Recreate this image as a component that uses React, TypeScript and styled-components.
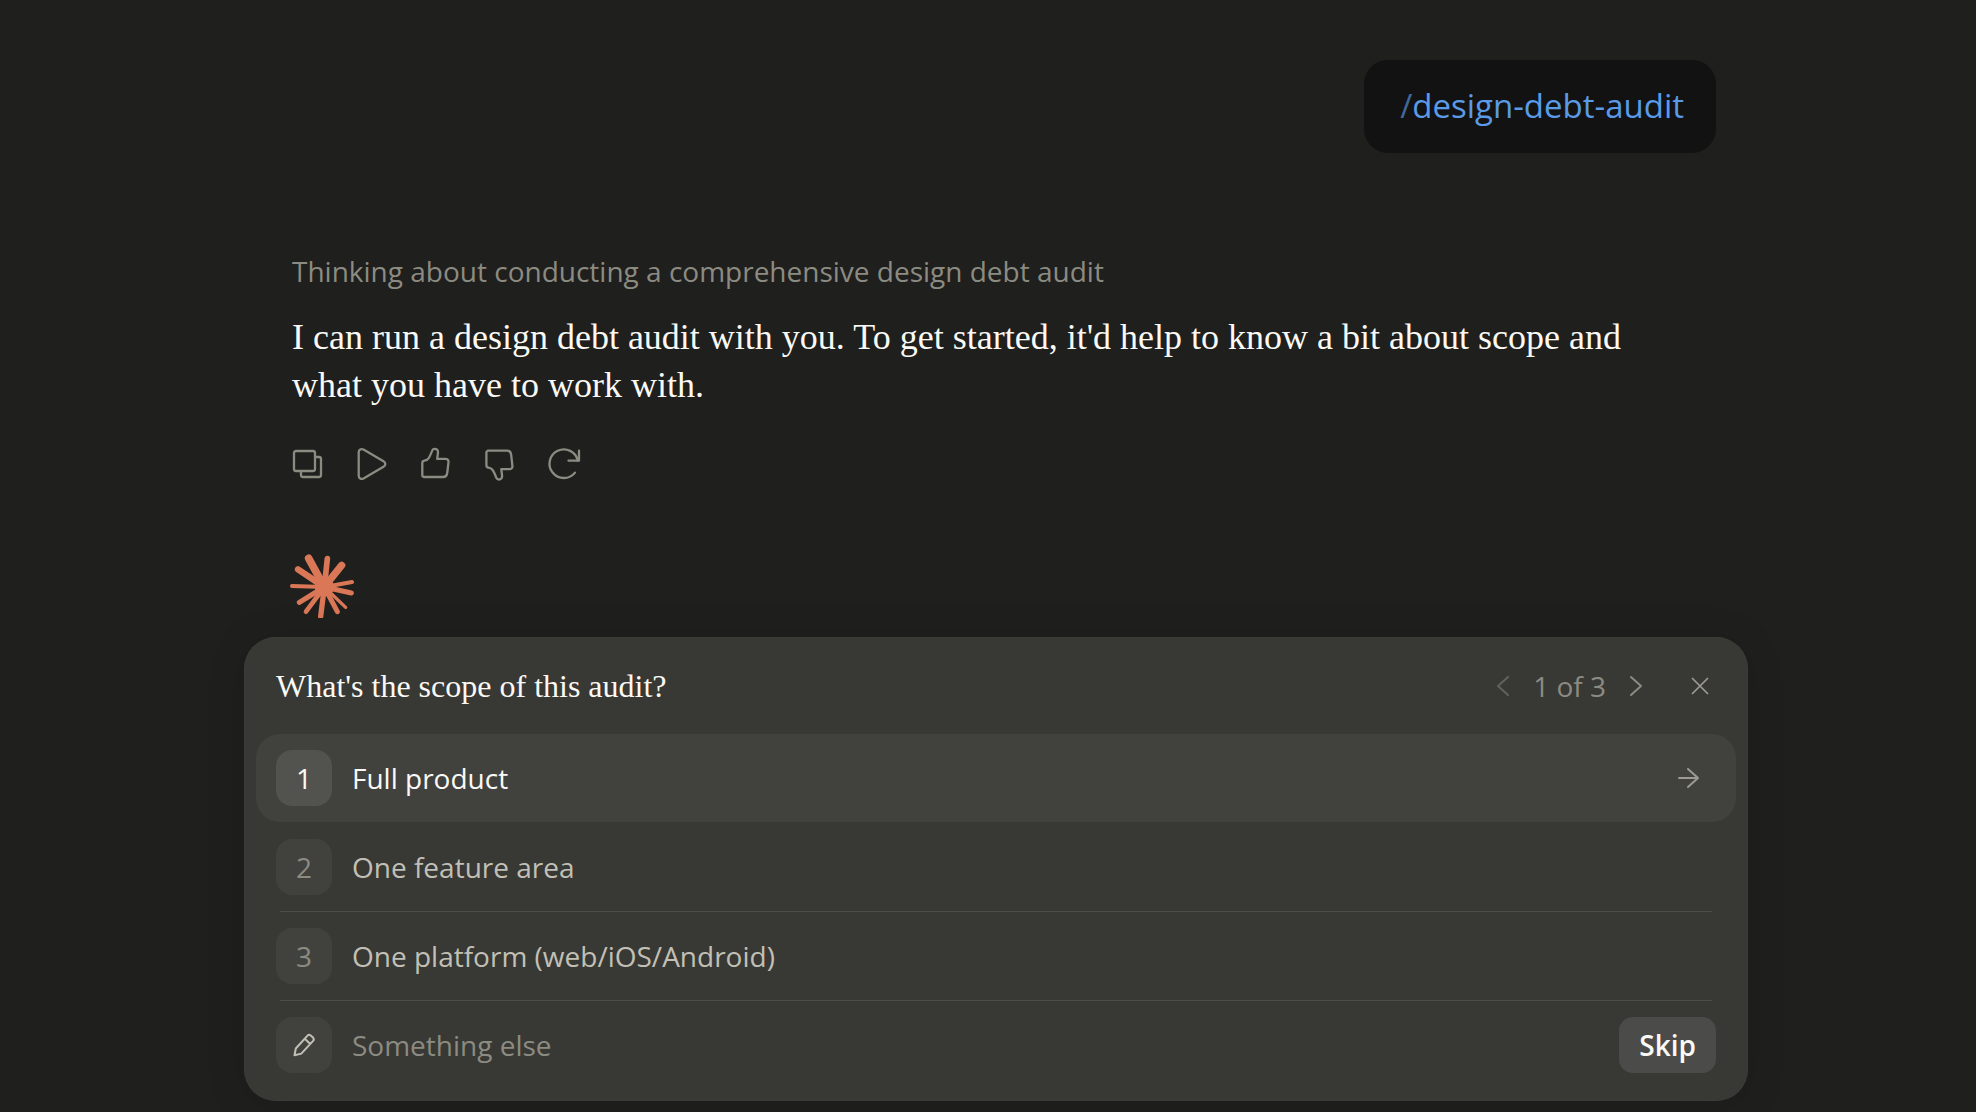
import React, { useState } from 'react';
import styled, { createGlobalStyle } from 'styled-components';

const sans = `"Open Sans", "Noto Sans", sans-serif`;
const serif = `"Liberation Serif", serif`;

const GlobalStyle = createGlobalStyle`
  *, *::before, *::after { box-sizing: border-box; }
  body { margin: 0; background: #1f1f1d; color: #faf9f5; font-family: ${sans}; }
  button, input { font: inherit; color: inherit; }
  button { border: 0; padding: 0; background: none; cursor: pointer; }
`;

const Page = styled.div`
  min-height: 100vh;
  padding: 60px 228px 11px 244px;
  display: flex;
  flex-direction: column;
`;

const Conversation = styled.main`
  display: flex;
  flex-direction: column;
  padding: 0 32px 0 48px;
`;

const UserMessage = styled.div`
  align-self: flex-end;
  padding: 24px 32px 25px 36px;
  border-radius: 24px;
  background: #121212;
  color: #5a9ae6;
  font-size: 33px;
  line-height: 44px;
`;

const Slash = styled.span`
  color: #41689a;
`;

const Thinking = styled.p`
  margin: 98px 0 0;
  color: #8c8b82;
  font-size: 28px;
  line-height: 40px;
`;

const Answer = styled.p`
  margin: 22px 0 0;
  padding-right: 32px;
  font-family: ${serif};
  font-size: 36px;
  line-height: 48px;
`;

const Actions = styled.div`
  display: flex;
  gap: 32px;
  margin-top: 39px;
  color: #8c8b82;
`;

const IconButton = styled.button<{ $faint?: boolean }>`
  display: flex;
  align-items: center;
  justify-content: center;
  width: 32px;
  height: 32px;
  opacity: ${(p) => (p.$faint ? 0.5 : 1)};
`;

const Icon = styled.svg<{ $weight?: number }>`
  display: block;
  flex: none;
  overflow: visible;
  fill: none;
  stroke: currentColor;
  stroke-width: ${(p) => p.$weight ?? 2};
  stroke-linecap: round;
  stroke-linejoin: round;
`;

const Logo = styled.svg`
  display: block;
  width: 64px;
  height: 64px;
  margin: 74px 0 0 -2px;
  fill: #d97757;
  stroke: #d97757;
  stroke-linecap: round;
`;

const Panel = styled.form`
  margin-top: 19px;
  padding: 12px;
  border-radius: 32px;
  background: #383834;
  box-shadow: inset 0 0 0 1px #3b3b37, 0 4px 40px rgba(0, 0, 0, 0.12);
`;

const PanelHeader = styled.div`
  display: flex;
  align-items: center;
  height: 73px;
  margin-bottom: 12px;
  padding: 0 20px;
`;

const Question = styled.h2`
  flex: 1;
  margin: 0;
  font-family: ${serif};
  font-size: 32px;
  font-weight: 400;
  line-height: 40px;
`;

const Pager = styled.div`
  display: flex;
  align-items: center;
  gap: 14px;
  margin-right: 32px;
  color: #8c8b82;
  font-size: 28px;
  line-height: 40px;
`;

const OptionList = styled.ul`
  margin: 0;
  padding: 0;
  list-style: none;
`;

const OptionItem = styled.li<{ $divided?: boolean }>`
  padding-bottom: 1px;
  background: linear-gradient(#4d4d49, #4d4d49) 50% 100% / calc(100% - 48px) ${(p) => (p.$divided ? '1px' : '0')} no-repeat;
`;

const OptionButton = styled.button<{ $active?: boolean }>`
  display: flex;
  align-items: center;
  gap: 20px;
  width: 100%;
  height: 88px;
  padding: 0 32px 0 20px;
  border-radius: 24px;
  background: ${(p) => (p.$active ? '#41413d' : 'transparent')};
  color: ${(p) => (p.$active ? '#faf9f5' : '#c2c0b6')};
  font-size: 28px;
  line-height: 40px;
  text-align: left;
`;

const Badge = styled.span<{ $active?: boolean; $bright?: boolean }>`
  display: flex;
  align-items: center;
  justify-content: center;
  flex: none;
  width: 56px;
  height: 56px;
  border-radius: 16px;
  background: ${(p) => (p.$active ? '#52524f' : '#41413d')};
  color: ${(p) => (p.$active ? '#faf9f5' : p.$bright ? '#c2c0b6' : '#8c8b82')};
`;

const OptionLabel = styled.span`
  flex: 1;
`;

const Arrow = styled.span`
  color: #9c9a92;
`;

const CustomRow = styled.label`
  display: flex;
  align-items: center;
  gap: 20px;
  height: 88px;
  padding: 0 20px;
`;

const CustomInput = styled.input`
  flex: 1;
  min-width: 0;
  height: 56px;
  padding: 0;
  border: 0;
  outline: 0;
  background: transparent;
  font-size: 28px;
  &::placeholder { color: #8c8b82; opacity: 1; }
`;

const SkipButton = styled.button`
  height: 56px;
  padding: 0 20px;
  border-radius: 14px;
  background: #4b4b49;
  font-size: 28px;
  font-weight: 600;
  line-height: 40px;
`;

const rays = [
  [116, 83, 23], [172, 84, 17], [215, 104, 22], [246, 154, 12], [244, 187, 15], [227, 230, 10],
  [202, 243, 15], [152, 257, 16], [108, 243, 14], [88, 215, 15], [66, 166, 12], [84, 116, 19],
];

const options = ['Full product', 'One feature area', 'One platform (web/iOS/Android)'];

export default function App() {
  const [active, setActive] = useState(0);
  return (
    <>
      <GlobalStyle />
      <Page>
        <Conversation>
          <UserMessage><Slash>/</Slash>design-debt-audit</UserMessage>
          <Thinking>Thinking about conducting a comprehensive design debt audit</Thinking>
          <Answer>
            I can run a design debt audit with you. To get started, it'd help to know a bit about scope and what you have to work with.
          </Answer>
          <Actions>
            <IconButton aria-label="Copy">
              <Icon $weight={2.3} width="32" height="32" viewBox="0 0 32 32">
                <rect x="2" y="3" width="21" height="20" rx="2" />
                <path d="M23.5 9H27a2 2 0 0 1 2 2v16a2 2 0 0 1-2 2H11a2 2 0 0 1-2-2v-3.500" />
              </Icon>
            </IconButton>
            <IconButton aria-label="Read aloud">
              <Icon $weight={2.3} width="32" height="32" viewBox="0 0 32 32">
                <path d="M2.700 4.500C2.700 1.500 5 .3 7.500 1.600L27.500 13.200C30 14.700 30 17.300 27.500 18.800L7.500 30.400C5 31.700 2.700 30.500 2.700 27.500Z" />
              </Icon>
            </IconButton>
            <IconButton aria-label="Good response">
              <Icon $weight={2.3} width="32" height="32" viewBox="0 0 32 32">
                <path d="M2.300 15C2.300 13.500 3 12.800 4.400 12.600C6.500 12.300 8 11.500 9 9.700C10.200 7.500 11.200 5.500 12 3C12.500 1.300 13.400.8 14.700.8C16.800.8 18.100 2.200 18 4.300L17.200 10.800H25.300C27.600 10.800 28.700 12.200 28.500 14.200L27.300 24.500C27 27.500 25.700 29 23 29H4.300C3 29 2.300 28.300 2.300 27Z" />
              </Icon>
            </IconButton>
            <IconButton aria-label="Bad response">
              <Icon $weight={2.3} width="32" height="32" viewBox="0 0 32 32">
                <path d="M2.400 17.300C2.400 18.800 3.100 19.500 4.500 19.700C6.600 20 8.100 20.800 9.100 22.600C10.300 24.800 11.300 26.800 12.100 29.300C12.600 31 13.500 31.500 14.800 31.500C16.900 31.500 18.200 30.100 18.100 28L17.300 21.200H25.400C27.500 21.200 28.600 19.800 28.400 18L27.200 7C26.900 4.200 25.600 2.700 23 2.700H4.400C3.100 2.700 2.400 3.400 2.400 4.700Z" />
              </Icon>
            </IconButton>
            <IconButton aria-label="Retry">
              <Icon $weight={2.3} width="32" height="32" viewBox="0 0 32 32">
                <path d="M27 24.600A14.300 14.300 0 1 1 29.800 12.700" />
                <path d="M31 2.700V12.700H20.500" />
              </Icon>
            </IconButton>
          </Actions>
          <Logo viewBox="60 70 192 192" role="img" aria-label="Assistant">
            {rays.map(([x, y, w]) => (
              <line key={`${x}-${y}`} x1="163" y1="169" x2={x} y2={y} strokeWidth={w} />
            ))}
            <circle cx="163" cy="169" r="29" stroke="none" />
          </Logo>
        </Conversation>

        <Panel onSubmit={(e) => e.preventDefault()}>
          <PanelHeader>
            <Question>What's the scope of this audit?</Question>
            <Pager>
              <IconButton type="button" $faint aria-label="Previous question">
                <Icon width="12" height="20" viewBox="0 0 12 20"><path d="M11 1 1 10 11 19" /></Icon>
              </IconButton>
              <span>1 of 3</span>
              <IconButton type="button" aria-label="Next question">
                <Icon width="12" height="20" viewBox="0 0 12 20"><path d="M1 1 11 10 1 19" /></Icon>
              </IconButton>
            </Pager>
            <IconButton type="button" aria-label="Close">
              <Icon $weight={1.7} width="16" height="16" viewBox="0 0 16 16" color="#9c9a92"><path d="M.5.5 15.500 15.500M15.500.5.5 15.500" /></Icon>
            </IconButton>
          </PanelHeader>
          <OptionList>
            {options.map((label, i) => (
              <OptionItem key={label} $divided={i !== active}>
                <OptionButton type="button" $active={i === active} onClick={() => setActive(i)}>
                  <Badge $active={i === active}>{i + 1}</Badge>
                  <OptionLabel>{label}</OptionLabel>
                  {i === active && (
                    <Arrow>
                      <Icon width="32" height="20" viewBox="0 0 32 20"><path d="M7 10H26M16 1 26 10 16 19" /></Icon>
                    </Arrow>
                  )}
                </OptionButton>
              </OptionItem>
            ))}
          </OptionList>
          <CustomRow>
            <Badge $bright>
              <Icon width="22" height="24" viewBox="0 0 22 24">
                <path d="M1.500 22.200 2.800 15.500 14.500 2.700Q16 1 17.700 2.500L20 4.600Q21.600 6.200 20.100 7.900L8.300 20.600ZM11.800 5.800 17 10.700" />
              </Icon>
            </Badge>
            <CustomInput type="text" aria-label="Something else" placeholder="Something else" />
            <SkipButton type="button">Skip</SkipButton>
          </CustomRow>
        </Panel>
      </Page>
    </>
  );
}
